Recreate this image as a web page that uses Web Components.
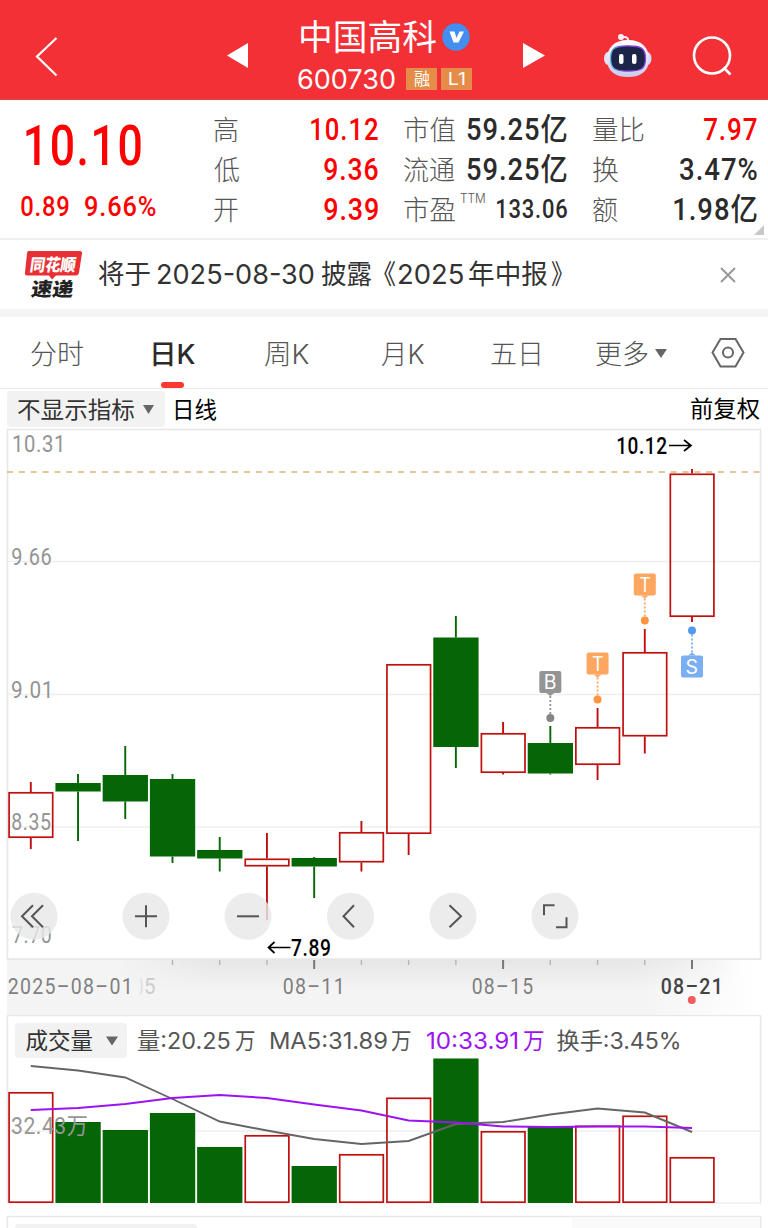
<!DOCTYPE html>
<html lang="zh-CN">
<head>
<meta charset="utf-8">
<title>中国高科 600730</title>
<style>
    html, body {
        margin: 0;
        width: 768px;
        height: 1228px;
        overflow: hidden;
        background: #fff;
    }
</style>
</head>
<body>
<stock-page></stock-page>

<script>
const NUM = 'Roboto, "Noto Sans CJK SC", sans-serif';
const CJK = 'Inter, "Noto Sans CJK SC", sans-serif';
const ctx = document.createElement('canvas').getContext('2d');

// svg <text> whose ink starts at x and is exactly w wide
function inkText(str, x, y, w, size, fill, weight = 400, family = CJK, spacing = 0) {
    ctx.font = `${weight} ${size}px ${family}`;
    ctx.letterSpacing = `${spacing}px`;
    const m = ctx.measureText(str);
    const sx = w / (m.actualBoundingBoxLeft + m.actualBoundingBoxRight);
    const tx = x + m.actualBoundingBoxLeft * sx;
    return `<text transform="translate(${tx.toFixed(2)} ${y}) scale(${sx.toFixed(4)} 1)"
        style='font:${weight} ${size}px ${family};letter-spacing:${spacing}px' fill="${fill}">${str}</text>`;
}

class FitText extends HTMLElement {
    connectedCallback() {
        if (!this.shadowRoot) this.attachShadow({ mode: 'open' });
        const w = +this.getAttribute('w');
        const size = +this.getAttribute('size');
        const dy = +(this.getAttribute('dy') || 0);
        const weight = this.getAttribute('weight') || 400;
        const num = this.hasAttribute('num');
        this.shadowRoot.innerHTML = `
            <style>
                :host { display: block; flex: none; }
                svg { display: block; overflow: visible; }
            </style>
            <svg width="${w}" height="${size}">
                ${inkText(this.getAttribute('text'), 0, size * 0.86 + dy, w, size, 'currentColor', weight, num ? NUM : CJK, num ? size * 0.035 : 0)}
            </svg>`;
    }
}
customElements.define('fit-text', FitText);

class StockHeader extends HTMLElement {
    connectedCallback() {
        this.attachShadow({ mode: 'open' }).innerHTML = `
            <style>
                :host {
                    display: grid;
                    grid-template-columns: 227px 70px 176px 50px 1fr;
                    height: 100px;
                    box-sizing: border-box;
                    background: #f23036;
                    border-bottom: 1px solid #dd4a45;
                    color: #fff;
                }
                svg { display: block; }
                .back { padding: 37px 0 0 34px; }
                .prev { padding-top: 43px; }
                .next { padding: 43px 0 0 50px; }
                .title { display: flex; flex-direction: column; padding-top: 19px; gap: 11px; }
                .row { display: flex; align-items: center; padding-left: 1px; }
                .name { padding-left: 4px; gap: 6px; }
                .tags { display: flex; gap: 4px; margin-left: 11px; }
                .tag {
                    display: flex;
                    align-items: center;
                    justify-content: center;
                    width: 31px;
                    height: 22px;
                    background: #e58d48;
                }
                .tools { display: flex; gap: 39px; padding: 33px 0 0 81px; }
                .search { padding-top: 3px; }
            </style>
            <div class="back">
                <svg width="24" height="40" fill="none" stroke="#fff" stroke-width="2.2"><path d="M22.500 1 3 19.500 22.500 38.500"/></svg>
            </div>
            <div class="prev"><svg width="22" height="26" fill="#fff"><path d="M0 12.500 21 0v25z"/></svg></div>
            <div class="title">
                <div class="row name">
                    <fit-text text="中国高科" w="135" size="35" dy="0.5"></fit-text>
                    <svg width="28" height="28">
                        <circle cx="14" cy="14" r="13.700" fill="#438ff0"/>
                        <path d="M7.500 8.500h5l2 6.500 3-6.500h4.500L16.500 19.500h-5z" fill="#fff"/>
                    </svg>
                </div>
                <div class="row">
                    <fit-text text="600730" w="97" size="27" dy="0.5"></fit-text>
                    <div class="tags">
                        <div class="tag"><fit-text text="融" w="16" size="17"></fit-text></div>
                        <div class="tag"><fit-text text="L1" w="16" size="17"></fit-text></div>
                    </div>
                </div>
            </div>
            <div class="next"><svg width="22" height="26" fill="#fff"><path d="M22 12.500 0 0v25z"/></svg></div>
            <div class="tools">
                <svg width="48" height="45">
                    <defs>
                        <linearGradient id="shell" x2="0" y2="1"><stop stop-color="#fff"/><stop offset="1" stop-color="#c9c9ec"/></linearGradient>
                        <linearGradient id="rim"><stop stop-color="#62bdf0"/><stop offset=".4" stop-color="#6f35c9"/><stop offset="1" stop-color="#8c45df"/></linearGradient>
                    </defs>
                    <path d="M17.500 4h3q3.500 0 4 4" fill="none" stroke="#eee9f8" stroke-width="2"/>
                    <circle cx="17" cy="4" r="3" fill="#f4efff"/>
                    <ellipse cx="4" cy="25.500" rx="4" ry="6.500" fill="#e2e3fb"/>
                    <ellipse cx="43.500" cy="25.500" rx="4" ry="6.500" fill="#d5d8f8"/>
                    <path d="M24 7C38 7 45 15 45 26c0 12-8 18-21 18S3 38 3 26C3 15 10 7 24 7z" fill="url(#shell)"/>
                    <path d="M24 13c13 0 17.500 2 17.500 12.500S37 38 24 38 6.500 36 6.500 25.500 11 13 24 13z" fill="#1c2547" stroke="url(#rim)" stroke-width="1.300"/>
                    <rect x="15" y="21" width="4.500" height="10" rx="2" fill="#fff"/>
                    <rect x="28" y="21" width="4.500" height="10" rx="2" fill="#fff"/>
                </svg>
                <svg class="search" width="42" height="42" fill="none" stroke="#fff" stroke-width="2.600"><circle cx="21" cy="19.500" r="18"/><path d="m32.500 31.500 7 7"/></svg>
            </div>`;
    }
}
customElements.define('stock-header', StockHeader);

class QuotePanel extends HTMLElement {
    connectedCallback() {
        const cell = ([label, lw, value, vw, color, size = 31]) => `
            <div class="cell">
                <fit-text text="${label}" w="${lw}" size="27" weight="300"></fit-text>
                ${label === '市盈' ? '<fit-text class="ttm" text="TTM" w="25" size="13" weight="300"></fit-text>' : ''}
                <fit-text num class="v" style="color:${color}" text="${value}" w="${vw}" size="${size}" weight="500" dy="-1.5"></fit-text>
            </div>`;
        const red = '#f00', dark = '#2b2b2b';
        const cols = [
            [['高', 24, '10.12', 67, red], ['低', 25, '9.36', 54, red], ['开', 24, '9.39', 54, red]],
            [['市值', 51, '59.25亿', 100, dark], ['流通', 51, '59.25亿', 100, dark], ['市盈', 51, '133.06', 70, dark, 26]],
            [['量比', 51, '7.97', 53, red], ['换', 25, '3.47%', 77, dark], ['额', 25, '1.98亿', 83, dark]],
        ];
        this.attachShadow({ mode: 'open' }).innerHTML = `
            <style>
                :host {
                    position: relative;
                    display: grid;
                    grid-template-columns: 188px 164px 163px 164px;
                    column-gap: 26px;
                    height: 140px;
                    box-sizing: border-box;
                    border-bottom: 2px solid #efefef;
                    padding-top: 10px;
                }
                .main { color: #f00; padding: 8px 0 0 21px; }
                .price { padding-left: 5px; }
                .diff { display: flex; gap: 16px; padding-top: 19px; }
                .col { display: flex; flex-direction: column; }
                .cell { display: flex; align-items: center; height: 40px; color: #555; }
                .v { margin-left: auto; }
                .ttm { align-self: flex-start; margin: 2px 0 0 5px; }
                .more { position: absolute; right: 4px; bottom: 3px; }
            </style>
            <div class="main">
                <fit-text num class="price" text="10.10" w="115" size="55" weight="500"></fit-text>
                <div class="diff">
                    <fit-text num text="0.89" w="48" size="28" weight="500"></fit-text>
                    <fit-text num text="9.66%" w="71" size="28" weight="500"></fit-text>
                </div>
            </div>
            ${cols.map(col => `<div class="col">${col.map(cell).join('')}</div>`).join('')}
            <svg class="more" width="10" height="10" fill="#c8c8c8"><path d="M10 0v10H0z"/></svg>`;
    }
}
customElements.define('quote-panel', QuotePanel);

class NoticeBar extends HTMLElement {
    connectedCallback() {
        this.attachShadow({ mode: 'open' }).innerHTML = `
            <style>
                :host {
                    display: flex;
                    align-items: center;
                    height: 77px;
                    box-sizing: border-box;
                    border-bottom: 8px solid #f4f4f4;
                    color: #333;
                }
                .logo { margin: 0 16px 0 24px; }
                .close { margin-left: auto; margin-right: 32px; }
            </style>
            <svg class="logo" width="59" height="50">
                <path d="M4 1h52q2.500 0 2 2.500l-3 19q-.5 3-3 3H32l-4 4-3-4H3q-2.500 0-2-3L3 3.500Q3.500 1 4 1z" fill="#e83034"/>
                <g transform="skewX(-8)">
                    ${inkText('同花顺', 9, 20.5, 45, 17, '#fff', 900)}
                    ${inkText('速递', 13, 46, 42, 19, '#222', 900)}
                </g>
            </svg>
            <fit-text text="将于" w="51" size="27"></fit-text>
            <fit-text text="2025-08-30" w="156" size="27" style="margin-left:8px"></fit-text>
            <fit-text text="披露" w="51" size="27" style="margin-left:7px"></fit-text>
            <fit-text text="《" w="11" size="27" style="margin-left:12px"></fit-text>
            <fit-text text="2025" w="64" size="27" style="margin-left:4px"></fit-text>
            <fit-text text="年中报" w="78" size="27" style="margin-left:6px"></fit-text>
            <fit-text text="》" w="11" size="27" style="margin-left:4px"></fit-text>
            <svg class="close" width="16" height="16" fill="none" stroke="#999" stroke-width="2"><path d="m1 1 14 14M15 1 1 15"/></svg>`;
    }
}
customElements.define('notice-bar', NoticeBar);

class PeriodTabs extends HTMLElement {
    connectedCallback() {
        const tabs = [['分时', 52, 31], ['日K', 42, 70], ['周K', 44, 70], ['月K', 43, 72], ['五日', 49, 67], ['更多', 52, 56]];
        this.attachShadow({ mode: 'open' }).innerHTML = `
            <style>
                :host {
                    display: flex;
                    height: 72px;
                    box-sizing: border-box;
                    border-bottom: 1px solid #eaeaea;
                    color: #555;
                }
                .tab { display: flex; flex-direction: column; padding-top: 23px; }
                .active { color: #2b2b2b; }
                .active::after {
                    content: '';
                    width: 23px;
                    height: 6px;
                    border-radius: 3px;
                    background: #fc3830;
                    margin: 15px 0 0 8px;
                }
                .arrow { margin: 32px 0 0 7px; }
                .gear { margin: 20px 0 0 44px; }
            </style>
            ${tabs.map(([t, w, gap], i) => `
                <div class="tab ${i === 1 ? 'active' : ''}" style="margin-left:${gap}px">
                    <fit-text text="${t}" w="${w}" size="27" weight="${i === 1 ? 500 : 300}" dy="0.5"></fit-text>
                </div>`).join('')}
            <svg class="arrow" width="12" height="10" fill="#666"><path d="M0 0h12L6 9z"/></svg>
            <svg class="gear" width="34" height="32" fill="none" stroke="#666" stroke-width="2"><path d="M9.500 2h15L32.500 15.500 24.500 29.500h-15L1.500 15.500z"/><circle cx="17" cy="15.500" r="5"/></svg>`;
    }
}
customElements.define('period-tabs', PeriodTabs);

class ChartToolbar extends HTMLElement {
    connectedCallback() {
        this.attachShadow({ mode: 'open' }).innerHTML = `
            <style>
                :host { display: flex; align-items: center; height: 40px; padding: 0 8px 0 7px; color: #000; }
                .select {
                    display: flex;
                    align-items: center;
                    gap: 9px;
                    width: 147px;
                    height: 36px;
                    padding-left: 11px;
                    margin-right: 11px;
                    border-radius: 4px;
                    background: #f2f2f2;
                    color: #333;
                }
                .right { margin-left: auto; }
            </style>
            <div class="select">
                <fit-text text="不显示指标" w="116" size="23"></fit-text>
                <svg width="11" height="9" fill="#666"><path d="M0 0h11L5.500 9z"/></svg>
            </div>
            <fit-text text="日线" w="41" size="23"></fit-text>
            <fit-text class="right" text="前复权" w="69" size="23" dy="-0.5"></fit-text>`;
    }
}
customElements.define('chart-toolbar', ChartToolbar);

const RED = '#c00f0f';
const GREEN = '#056605';
const centerX = i => 30.8 + i * 47.23;

// up?, high, body top, body bottom, low, volume top
const days = [
    [1, 782, 792, 838, 849, 1092],
    [0, 774, 783, 791.5, 841, 1122],
    [0, 746, 775, 801.5, 819, 1130],
    [0, 774, 779, 856.5, 863, 1113],
    [0, 837, 850, 858.5, 871.5, 1147],
    [1, 833, 858.5, 866.5, 920, 1135],
    [0, 857, 858, 866.5, 898, 1166],
    [1, 821, 832, 862.5, 871.5, 1154],
    [1, 664, 664, 834, 855, 1097.5],
    [0, 616, 637.5, 747, 768, 1058.5],
    [1, 722, 733, 773, 774.5, 1131],
    [0, 726, 743, 773.5, 774.5, 1127],
    [1, 708, 727, 765, 780, 1125.5],
    [1, 629, 652, 736.5, 753.5, 1115.5],
    [1, 469, 473.5, 617, 622, 1157],
];

function bar(x, top, bottom, up) {
    return up
        ? `<rect x="${x - 21.7}" y="${top + .8}" width="43.600" height="${bottom - top - 1.6}" fill="none" stroke="${RED}" stroke-width="1.700"/>`
        : `<rect x="${x - 22.6}" y="${top}" width="45.300" height="${bottom - top}" fill="${GREEN}"/>`;
}

class CandleChart extends HTMLElement {
    connectedCallback() {
        const candles = days.map(([up, high, top, bottom, low], i) => {
            const x = centerX(i);
            return `<path d="M${x} ${high}V${top}M${x} ${bottom}V${low}" stroke="${up ? RED : GREEN}" stroke-width="1.900"/>` + bar(x, top, bottom, up);
        }).join('');
        const labels = [['10.31', 13, 49, 452], ['9.66', 12, 39, 565], ['9.01', 12, 38, 698], ['8.35', 12, 39, 830], ['7.70', 12, 39, 943]]
            .map(([t, x, w, y]) => inkText(t, x, y, w, 23, '#949494', 400, NUM, .7)).join('');
        const flag = (letter, i, top, dot, color, light) => {
            const x = centerX(i), down = dot > top;
            const edge = down ? top + 22 : top;
            const tip = down ? 3 : -3;
            return `
                <rect x="${x - 11}" y="${top}" width="22" height="22" rx="2" fill="${light}"/>
                <path d="M${x - 4} ${edge}h8l-4 ${tip}z" fill="${light}"/>
                <path d="M${x} ${edge + tip}V${dot}" stroke="${light}" stroke-width="1.800" stroke-dasharray="2 2"/>
                <circle cx="${x}" cy="${dot}" r="4" fill="${color}"/>
                ${inkText(letter, x - 5.5, top + 18, 11, 19.5, '#fff', 400)}`;
        };
        const buttons = [
            [34, 'M-1-11-12 0-1 11M9-11-2 0 9 11'],
            [146, 'M-11 0H11M0-11V11'],
            [248, 'M-11 0H11'],
            [350.5, 'M3.500-11-7 0 3.500 11'],
            [453, 'M-3.500-11 8 0-3.500 11'],
            [555, 'M-11-1V-11H-.5M1 11H11.500V1'],
        ];
        this.attachShadow({ mode: 'open' }).innerHTML = `
            <style>
                :host { display: block; height: 530px; }
                svg { display: block; overflow: visible; }
            </style>
            <svg width="768" height="530" viewBox="0 429 768 530">
                <g fill="none" stroke="#e8e8e8">
                    <rect x="7.500" y="429.500" width="753" height="529.500" stroke-width="1.600"/>
                    <path d="M8 561.500H760M8 694.500H760M8 827H760" stroke="#eee" stroke-width="1.500"/>
                </g>
                <path d="M7 472H760" stroke="#dcb478" stroke-width="1.400" stroke-dasharray="6 5.850"/>
                ${candles}
                ${labels}
                ${flag('B', 11, 671, 718, '#858585', '#949494')}
                ${flag('T', 12, 652.5, 699.5, '#fd943f', '#fda65f')}
                ${flag('T', 13, 573.5, 620.5, '#fd943f', '#fda65f')}
                ${flag('S', 14, 655.5, 630.5, '#5299ee', '#7baef3')}
                ${inkText('10.12', 617, 453.5, 50, 23, '#000', 500, NUM, .7)}
                ${inkText('7.89', 291, 955.5, 39, 23, '#000', 500, NUM, .7)}
                <path d="M669 445.500h22m-7-5.500 7 5.500-7 5.500M290.500 947.500h-22m6-5.500-6 5.500 6 5.500" fill="none" stroke="#000" stroke-width="1.700"/>
                ${buttons.map(([x, d]) => `
                    <g transform="translate(${x} 916.300)">
                        <circle r="23.500" fill="#e8e8e8" fill-opacity=".82"/>
                        <path d="${d}" fill="none" stroke="#555" stroke-width="2"/>
                    </g>`).join('')}
            </svg>`;
    }
}
customElements.define('candle-chart', CandleChart);

class DateAxis extends HTMLElement {
    connectedCallback() {
        const ticks = days.map((d, i) => {
            if (i < 3) return '';
            const major = i % 4 === 2;
            return `<path d="M${centerX(i)} 960V${major ? 969 : 965}" stroke="${major ? '#777' : '#b5b5b5'}" stroke-width="${major ? 2 : 1.4}"/>`;
        }).join('');
        this.attachShadow({ mode: 'open' }).innerHTML = `
            <style>
                :host { display: block; height: 56px; }
                svg { display: block; }
            </style>
            <svg width="768" height="56" viewBox="0 959 768 56">
                <defs>
                    <linearGradient id="fade" gradientUnits="userSpaceOnUse" x1="7" x2="761">
                        <stop stop-color="#f4f4f4"/><stop offset=".84" stop-color="#f4f4f4"/><stop offset="1" stop-color="#fff"/>
                    </linearGradient>
                    <linearGradient id="shade" x2="0" y2="1"><stop stop-color="#e5e5e5"/><stop offset="1" stop-color="#e5e5e5" stop-opacity="0"/></linearGradient>
                    <linearGradient id="sides"><stop stop-color="#000"/><stop offset=".15" stop-color="#fff"/><stop offset=".82" stop-color="#fff"/><stop offset="1" stop-color="#000"/></linearGradient>
                    <mask id="m"><rect x="120" y="959" width="620" height="56" fill="url(#sides)"/></mask>
                </defs>
                <rect x="7" y="959" width="754" height="56" fill="url(#fade)"/>
                <rect x="120" y="959" width="620" height="30" fill="url(#shade)" mask="url(#m)"/>
                <path d="M7 959.500H761" stroke="#e6e6e6"/>
                ${ticks}
                ${inkText('2025–08–01', 8.5, 994, 121, 22.5, '#808080', 400, NUM, 1.5)}
                ${inkText('5', 145, 994, 10, 22.5, '#ccc', 400, NUM)}
                <path d="M140.500 979q3 7 0 15" stroke="#ddd" stroke-width="1.500" fill="none"/>
                ${inkText('08–11', 283.5, 994, 58, 22.5, '#808080', 400, NUM, 1.5)}
                ${inkText('08–15', 472.5, 994, 60, 22.5, '#808080', 400, NUM, 1.5)}
                ${inkText('08–21', 661.5, 994, 58, 22.5, '#444', 500, NUM, 1.5)}
                <circle cx="691.800" cy="1000" r="4" fill="#f35b5f"/>
            </svg>`;
    }
}
customElements.define('date-axis', DateAxis);

class VolumeChart extends HTMLElement {
    connectedCallback() {
        const line = (ys, color) =>
            `<polyline points="${ys.map((y, i) => `${centerX(i)},${y}`).join(' ')}" fill="none" stroke="${color}" stroke-width="1.900"/>`;
        this.attachShadow({ mode: 'open' }).innerHTML = `
            <style>
                :host { display: block; height: 213px; }
                svg { display: block; }
            </style>
            <svg width="768" height="213" viewBox="0 1015 768 213">
                <g fill="none" stroke="#e8e8e8" stroke-width="1.500">
                    <path d="M7.500 1203V1015.500H760.500V1203.500M7.500 1228V1216.500H760.500V1228"/>
                    <path d="M8 1131H760M715 1203H760" stroke="#eee"/>
                </g>
                <rect x="572" y="1218" width="188" height="10" fill="#fafafa"/>
                <rect x="15" y="1023" width="112" height="35" rx="4" fill="#f2f2f2"/>
                <rect x="15" y="1224" width="182" height="10" rx="4" fill="#f2f2f2"/>
                ${days.map((d, i) => bar(centerX(i), d[5], 1203, d[0])).join('')}
                ${line([1066, 1070.5, 1077.5, 1099, 1121.5, 1130.5, 1139, 1144, 1141, 1124, 1122, 1114.5, 1108.5, 1112.5, 1132], '#666')}
                ${line([1110, 1108, 1104, 1098, 1095, 1098, 1104.5, 1110.5, 1120.5, 1122.5, 1126.5, 1127, 1126.5, 1126.5, 1128], '#9d12f2')}
                ${inkText('32.43万', 12, 1134, 75, 23, '#969696', 400, NUM, .5)}
                ${inkText('成交量', 25.5, 1049, 67, 22.5, '#333', 400)}
                <path d="M106 1036.500h12l-6 9z" fill="#666"/>
                ${inkText('量:20.25', 138, 1049, 92, 22.5, '#555')}
                ${inkText('万', 235, 1049, 20, 22.5, '#555')}
                ${inkText('MA5:31.89', 270, 1049, 117, 22.5, '#555')}
                ${inkText('万', 391, 1049, 20, 22.5, '#555')}
                ${inkText('10:33.91', 427, 1049, 91, 22.5, '#9d12f2')}
                ${inkText('万', 523, 1049, 21, 22.5, '#9d12f2')}
                ${inkText('换手:3.45%', 556.5, 1049, 123, 22.5, '#555')}
            </svg>`;
    }
}
customElements.define('volume-chart', VolumeChart);

class StockPage extends HTMLElement {
    connectedCallback() {
        this.attachShadow({ mode: 'open' }).innerHTML = `
            <style>
                :host { display: flex; flex-direction: column; width: 768px; }
            </style>
            <stock-header></stock-header>
            <quote-panel></quote-panel>
            <notice-bar></notice-bar>
            <period-tabs></period-tabs>
            <chart-toolbar></chart-toolbar>
            <candle-chart></candle-chart>
            <date-axis></date-axis>
            <volume-chart></volume-chart>`;
    }
}
customElements.define('stock-page', StockPage);
</script>
</body>
</html>
